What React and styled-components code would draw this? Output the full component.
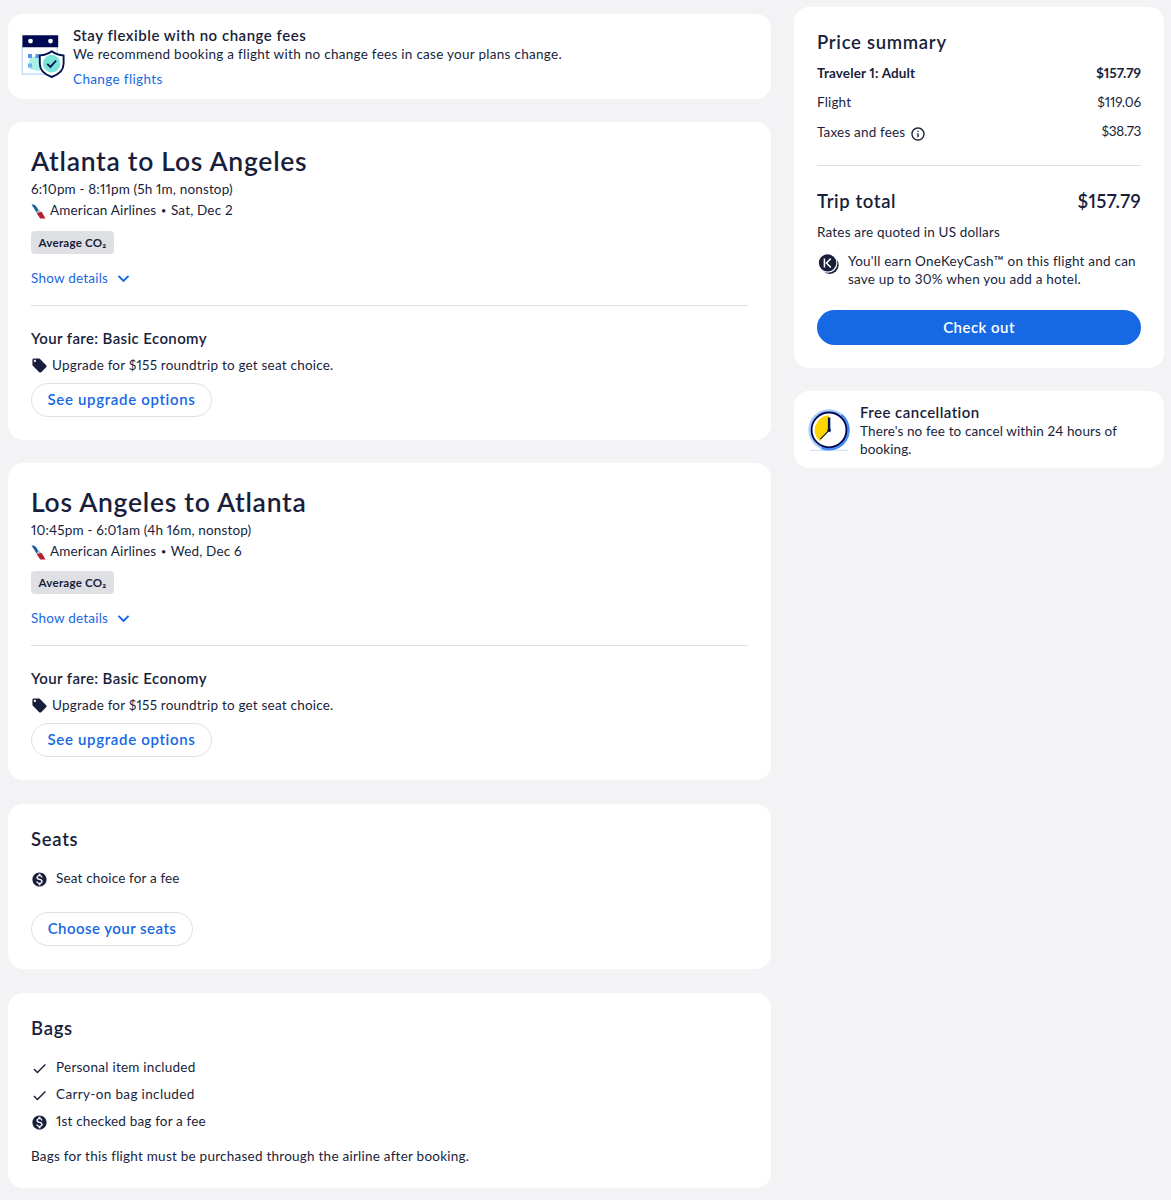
import styled, { createGlobalStyle } from "styled-components";
import {
  MdCheck,
  MdExpandMore,
  MdInfoOutline,
  MdLocalOffer,
  MdMonetizationOn,
} from "react-icons/md";

const flights = [
  {
    title: "Atlanta to Los Angeles",
    time: "6:10pm - 8:11pm (5h 1m, nonstop)",
    date: "Sat, Dec 2",
    badgeGap: 11,
  },
  {
    title: "Los Angeles to Atlanta",
    time: "10:45pm - 6:01am (4h 16m, nonstop)",
    date: "Wed, Dec 6",
    badgeGap: 10,
  },
];

const bags = [
  { icon: MdCheck, text: "Personal item included", track: 0.25 },
  { icon: MdCheck, text: "Carry-on bag included", track: 0.36 },
  { icon: MdMonetizationOn, text: "1st checked bag for a fee", track: 0.17 },
];

const CalendarShield = () => (
  <svg width="46" height="46" viewBox="0 0 46 46">
    <path d="M1.2 12h35v28.2h-35z" fill="#fff" stroke="#b9d6fb" strokeWidth="1.2" />
    <path d="M1.4 1.2h35.800v12H1.400z" fill="#000a52" />
    <circle cx="9.5" cy="7.1" r="2.4" fill="#fff" />
    <circle cx="29.5" cy="7.1" r="2.4" fill="#fff" />
    <path d="M9 24l10-4v17l-9-1.5-3-2.5z" fill="#a9efe6" />
    <path d="M7 20h4v4H7zM14.500 20h4v4h-4z" fill="#5b93e8" />
    <path d="M7 29.500h4v4H7z" fill="#6fb6ee" />
    <path
      d="M30.7 17.3c3.6 2.9 7.5 3.9 11.9 4.1v8.2c0 6.3-4.7 11-11.9 13.4-7.2-2.4-11.9-7.1-11.9-13.4v-8.2c4.4-.2 8.3-1.2 11.9-4.1z"
      fill="#fff"
      stroke="#00114f"
      strokeWidth="1.9"
      strokeLinejoin="round"
    />
    <circle cx="30.6" cy="29.6" r="8.8" fill="#7be4d9" />
    <path d="M26.2 29.9l3.2 3 5.7-6.2" fill="none" stroke="#00114f" strokeWidth="1.8" />
  </svg>
);

const Clock = () => (
  <svg width="44" height="44" viewBox="0 0 44 44">
    <path d="M2 41.400h38" stroke="#cfe2fd" strokeWidth="1.4" />
    <circle cx="21" cy="20.9" r="20.600" fill="#a6cdfb" />
    <path d="M34 4.900a20.600 20.600 0 0 1-21 35L21 20.900z" fill="#4b8cf2" />
    <circle cx="21" cy="20.900" r="17.4" fill="#fff" stroke="#000a52" strokeWidth="1.8" />
    <path d="M21 6.300a14.800 14.800 0 0 0-9.200 26l9.200-10.500z" fill="#ffd500" />
    <path d="M21.100 8.500V21" stroke="#00114f" strokeWidth="2.4" />
    <path d="M21.600 20.800l-9.300 9.300" stroke="#00114f" strokeWidth="1.1" />
    <circle cx="21.200" cy="21.200" r="1.8" fill="#00114f" />
  </svg>
);

const KeyCash = () => (
  <svg width="22" height="21" viewBox="0 0 22 21">
    <circle cx="12.7" cy="11" r="9" fill="#191e3b" />
    <circle cx="10.6" cy="8.900" r="9.300" fill="#191e3b" stroke="#fff" strokeWidth="1.2" />
    <path d="M7.400 4.600v8.800M13.800 4.600L9.400 9l4.400 4.400" fill="none" stroke="#fff" strokeWidth="1.5" />
  </svg>
);

const AirlineTail = () => (
  <svg width="15" height="15" viewBox="0 0 15 15">
    <path d="M.5.6c2.6 0 4 .6 5 2.2L8.300 7.500 5.600 8.600z" fill="#1c5f9e" />
    <path d="M7.600 4.800l2.400 3.300-4.300.9z" fill="#b9c3cc" />
    <path d="M5.600 8.900l5-1.200 3.900 6.800H9.200z" fill="#b3222c" />
  </svg>
);

const FlightCard = ({ title, time, date, badgeGap }) => (
  <Card>
    <FlightTitle>{title}</FlightTitle>
    <Text $top={2} $track={0.16}>
      {time}
    </Text>
    <Airline>
      <AirlineTail />
      <Text $track={0.17}>
        American Airlines <Dot>•</Dot> {date}
      </Text>
    </Airline>
    <Badge $top={badgeGap}>Average CO₂</Badge>
    <DetailsLink>
      Show details
      <MdExpandMore size={23} />
    </DetailsLink>
    <Divider $top={17} />
    <Subtitle $top={22} $track={0.38}>
      Your fare: Basic Economy
    </Subtitle>
    <Upgrade>
      <MdLocalOffer size={17} />
      <Text $track={0.21}>Upgrade for $155 roundtrip to get seat choice.</Text>
    </Upgrade>
    <PillButton $top={8} $width={181} $track={0.66}>
      See upgrade options
    </PillButton>
  </Card>
);

const App = () => {
  return (
    <>
      <GlobalStyle />
      <Page>
        <Main>
          <Banner>
            <CalendarShield />
            <div>
              <Subtitle $track={0.52}>Stay flexible with no change fees</Subtitle>
              <Text $height={18} $track={0.28}>
                We recommend booking a flight with no change fees in case your
                plans change.
              </Text>
              <TextLink>Change flights</TextLink>
            </div>
          </Banner>
          {flights.map(flight => (
            <FlightCard key={flight.title} {...flight} />
          ))}
          <Card $gap={24}>
            <SectionTitle>Seats</SectionTitle>
            <FeatureList>
              <li>
                <MdMonetizationOn size={17} />
                <Text $track={0.16}>Seat choice for a fee</Text>
              </li>
            </FeatureList>
            <PillButton $top={24} $width={162} $track={0.46}>
              Choose your seats
            </PillButton>
          </Card>
          <Card $gap={24} $bottom={22}>
            <SectionTitle>Bags</SectionTitle>
            <FeatureList>
              {bags.map(({ icon: Icon, text, track }) => (
                <li key={text}>
                  <Icon size={17} />
                  <Text $track={track}>{text}</Text>
                </li>
              ))}
            </FeatureList>
            <Text $top={15} $track={0.24}>
              Bags for this flight must be purchased through the airline after
              booking.
            </Text>
          </Card>
        </Main>
        <Side>
          <Card $gap={0}>
            <SectionTitle>Price summary</SectionTitle>
            <PriceRow $top={9}>
              <Text $bold $track={0.14}>
                Traveler 1: Adult
              </Text>
              <Text $bold $track={0}>
                $157.79
              </Text>
            </PriceRow>
            <PriceRow $top={9}>
              <Text $track={0.15}>Flight</Text>
              <Text $track={-0.1}>$119.06</Text>
            </PriceRow>
            <PriceRow $top={9}>
              <Fees>
                Taxes and fees
                <MdInfoOutline size={16} />
              </Fees>
              <Text $track={-0.3}>$38.73</Text>
            </PriceRow>
            <Divider $top={23} />
            <PriceRow $top={23}>
              <SectionTitle $track={0.6}>Trip total</SectionTitle>
              <SectionTitle $track={0.35}>$157.79</SectionTitle>
            </PriceRow>
            <Text $top={9} $track={0.18}>
              Rates are quoted in US dollars
            </Text>
            <Earn>
              <KeyCash />
              <Text $height={17.5} $track={0.22}>
                You'll earn OneKeyCash™ on this flight and can
                <br />
                save up to 30% when you add a hotel.
              </Text>
            </Earn>
            <CheckoutButton>Check out</CheckoutButton>
          </Card>
          <Notice>
            <Clock />
            <div>
              <Subtitle $track={0.46}>Free cancellation</Subtitle>
              <Text $top={1} $height={17.5} $track={0.12}>
                There's no fee to cancel within 24 hours of
                <br />
                booking.
              </Text>
            </div>
          </Notice>
        </Side>
      </Page>
    </>
  );
};

const GlobalStyle = createGlobalStyle`
  * {
    box-sizing: border-box;
  }
  body {
    margin: 0;
    background: #f3f3f5;
    color: #191e3b;
    font-family: Lato, "Liberation Sans", sans-serif;
    font-size: 13.5px;
    font-variant-numeric: proportional-nums;
  }
  svg {
    display: block;
    flex-shrink: 0;
  }
`;

const Page = styled.div`
  display: grid;
  grid-template-columns: 763px 370px;
  column-gap: 23px;
  align-items: start;
  height: 1200px;
  padding: 0 8px;
  overflow: hidden;
`;

const Main = styled.main`
  padding-top: 14px;
`;

const Side = styled.aside`
  padding-top: 7px;
`;

const Card = styled.section`
  margin-top: ${p => p.$gap ?? 23}px;
  padding: 23px 23px ${p => p.$bottom ?? 23}px;
  background: #fff;
  border-radius: 15px;
`;

const Banner = styled.section`
  display: flex;
  gap: 6px;
  padding: 11px 13px;
  background: #fff;
  border-radius: 15px;
  & > svg {
    margin-top: 9px;
  }
`;

const Notice = styled(Banner)`
  gap: 8px;
  margin-top: 23px;
  padding: 11px 14px 10px;
  & > svg {
    margin-top: 7px;
  }
`;

const Text = styled.p`
  margin: ${p => p.$top ?? 0}px 0 0;
  font-weight: ${p => (p.$bold ? 700 : 400)};
  line-height: ${p => p.$height ?? 20}px;
  letter-spacing: ${p => p.$track ?? 0.25}px;
  white-space: nowrap;
`;

const Dot = styled.span`
  padding: 0 1px;
  font-size: 9px;
  line-height: 1;
  vertical-align: 1px;
`;

const FlightTitle = styled.h2`
  margin: 0;
  font-size: 26.5px;
  font-weight: 600;
  line-height: 32px;
  letter-spacing: 0.72px;
`;

const SectionTitle = styled.h3`
  margin: 0;
  font-size: 18.5px;
  font-weight: 600;
  line-height: 24px;
  letter-spacing: ${p => p.$track ?? 0.7}px;
`;

const Subtitle = styled.h4`
  margin: ${p => p.$top ?? 0}px 0 0;
  font-size: 15px;
  font-weight: 600;
  line-height: 20px;
  letter-spacing: ${p => p.$track}px;
`;

const TextLink = styled.a`
  display: block;
  margin-top: 7px;
  color: #1668e3;
  line-height: 18px;
  letter-spacing: 0.36px;
  cursor: pointer;
`;

const DetailsLink = styled.a`
  display: flex;
  align-items: center;
  gap: 4px;
  height: 20px;
  margin-top: 14px;
  color: #1668e3;
  letter-spacing: 0.22px;
  cursor: pointer;
`;

const Airline = styled.div`
  display: flex;
  align-items: center;
  gap: 4px;
  margin-top: 1px;
  svg {
    margin-top: 3px;
  }
`;

const Badge = styled.div`
  width: 83px;
  height: 23px;
  margin-top: ${p => p.$top}px;
  background: #dfe0e4;
  border-radius: 4px;
  font-size: 11.6px;
  font-weight: 700;
  line-height: 23px;
  letter-spacing: 0.2px;
  text-align: center;
`;

const Divider = styled.hr`
  height: 1px;
  margin: ${p => p.$top}px 0 0;
  border: none;
  background: #dfe0e4;
`;

const Upgrade = styled.div`
  display: flex;
  align-items: center;
  gap: 4px;
  margin-top: 7px;
  svg {
    margin-top: 1px;
  }
`;

const PillButton = styled.button`
  display: block;
  width: ${p => p.$width}px;
  height: 34px;
  margin-top: ${p => p.$top}px;
  padding: 0 0 2px;
  border: 1px solid #dfe0e4;
  border-radius: 17px;
  background: #fff;
  color: #1668e3;
  font-family: inherit;
  font-size: 15px;
  font-weight: 600;
  letter-spacing: ${p => p.$track}px;
  white-space: nowrap;
`;

const FeatureList = styled.ul`
  display: flex;
  flex-direction: column;
  gap: 7px;
  margin: 17px 0 0;
  padding: 0;
  list-style: none;
  li {
    display: flex;
    align-items: center;
    gap: 8px;
  }
  svg {
    margin-top: 3px;
  }
`;

const PriceRow = styled.div`
  display: flex;
  justify-content: space-between;
  margin-top: ${p => p.$top}px;
`;

const Fees = styled.div`
  display: flex;
  align-items: center;
  gap: 5px;
  padding-top: 1px;
  line-height: 20px;
  letter-spacing: 0.18px;
  svg {
    margin-top: 3px;
  }
`;

const Earn = styled.div`
  display: flex;
  gap: 9px;
  margin-top: 11px;
  svg {
    margin-top: 1px;
  }
`;

const CheckoutButton = styled.button`
  display: block;
  width: 100%;
  height: 35px;
  margin-top: 22px;
  padding: 0 0 2px;
  border: none;
  border-radius: 18px;
  background: #1668e3;
  color: #fff;
  font-family: inherit;
  font-size: 15px;
  font-weight: 600;
  letter-spacing: 0.45px;
`;

export default App;
